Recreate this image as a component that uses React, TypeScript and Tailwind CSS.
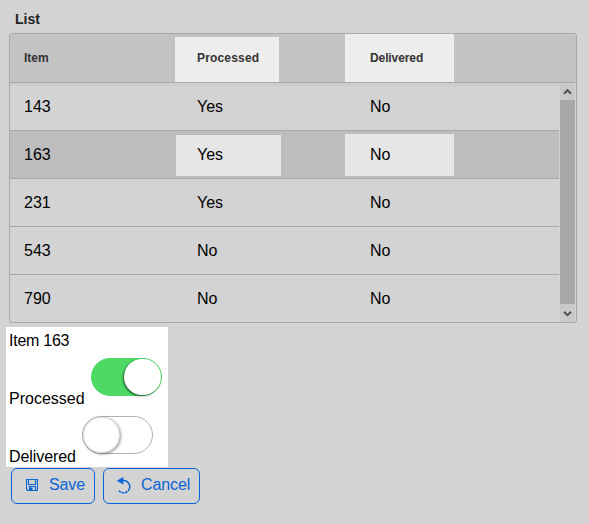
import React from "react";

type Row = { id: string; processed: boolean; delivered: boolean };

const rows: Row[] = [
  { id: "143", processed: true, delivered: false },
  { id: "163", processed: true, delivered: false },
  { id: "231", processed: true, delivered: false },
  { id: "543", processed: false, delivered: false },
  { id: "790", processed: false, delivered: false },
];

const yesNo = (v: boolean) => (v ? "Yes" : "No");

function Header() {
  return (
    <div className="flex h-[49px] items-end border-b border-[#a8a8a8] bg-[#c3c3c3] text-xs font-bold text-[#333]">
      <div className="flex h-12 w-[165px] items-center pl-3.5">Item</div>
      <div className="flex h-[45px] w-[104px] items-center bg-[#ededed] pb-[3px] pl-[22px] tracking-[0.17px]">Processed</div>
      <div className="ml-[66px] flex h-12 w-[109px] items-center bg-[#ededed] pl-[25px] tracking-[-0.1px]">Delivered</div>
    </div>
  );
}

function ListRow({ row, first, last, selected }: { row: Row; first: boolean; last: boolean; selected: boolean }) {
  const mark = selected ? "bg-[#e6e6e6]" : "";
  return (
    <div
      className={`flex items-start ${last ? "h-[47px]" : "h-12 border-b border-[#a8a8a8]"} ${
        selected ? "bg-[#bdbdbd]" : ""
      } ${first ? "shadow-[inset_0_3px_0_#cdcdcd]" : ""}`}
    >
      <div className="flex h-[47px] w-[166px] items-center pl-3.5">{row.id}</div>
      <div className={`mt-1 flex h-[41px] w-[105px] items-center pl-[21px] pb-px ${mark}`}>{yesNo(row.processed)}</div>
      <div className={`ml-16 mt-[3px] flex h-[42px] w-[109px] items-center pl-[25px] ${mark}`}>{yesNo(row.delivered)}</div>
    </div>
  );
}

function ScrollBar() {
  return (
    <div className="flex w-[15px] flex-col bg-[#a8a8a8]">
      <div className="flex h-[17px] items-center justify-center bg-[#c9c9c9]">
        <svg width="9" height="7" viewBox="0 0 9 7" fill="none" stroke="#505050" strokeWidth="2">
          <path d="M1 5.7 4.5 2.2 8 5.7" />
        </svg>
      </div>
      <div className="flex-1" />
      <div className="flex h-[18px] items-center justify-center bg-[#c9c9c9]">
        <svg width="9" height="7" viewBox="0 0 9 7" fill="none" stroke="#505050" strokeWidth="2">
          <path d="M1 1.7 4.5 5.2 8 1.7" />
        </svg>
      </div>
    </div>
  );
}

function Toggle({ on }: { on: boolean }) {
  return (
    <div
      className={`flex h-[38px] w-[71px] rounded-full border ${
        on ? "justify-end border-[#4cd964] bg-[#4cd964]" : "border-[#b3b3b3] bg-white"
      }`}
    >
      <div
        className={`h-9 w-[37px] rounded-full bg-white ${
          on
            ? "shadow-[-1px_1px_2px_rgba(0,0,0,0.6)]"
            : "shadow-[inset_0_0_2px_rgba(0,0,0,0.4),1px_1px_3px_rgba(0,0,0,0.4)]"
        }`}
      />
    </div>
  );
}

function SaveIcon() {
  return (
    <svg className="mb-0.5" width="12" height="12" viewBox="0 0 12 12" fill="none" stroke="#0b64d4" strokeWidth="1.15">
      <path d="M.5.5h11v11H1.5l-1-1zM2.5.5v5h7v-5M3.5 11.5v-4h6v4" />
      <path d="M4 8.5h2.5V11H4z" fill="#0b64d4" stroke="none" />
    </svg>
  );
}

function UndoIcon() {
  return (
    <svg className="mb-0.5" width="15" height="17" viewBox="0 0 15 17" fill="none" stroke="#0b64d4" strokeWidth="1.5">
      <path d="M6.5 3.6A6.2 6.2 0 0 1 13.4 11.8" />
      <path d="M13.4 11.8a6.2 6.2 0 0 1-10.9 1.4" strokeDasharray="2.6 .8" />
      <path d="M.7 3.8 7.3 0v7.6z" fill="#0b64d4" stroke="none" />
    </svg>
  );
}

export default function App() {
  return (
    <main className="h-[524px] w-[589px] overflow-hidden bg-[#d3d3d3] font-['Liberation_Sans',Arial,sans-serif] text-base leading-5 text-black">
      <h1 className="h-[33px] pl-[15px] pt-[9px] text-sm font-bold leading-5 text-[#222]">List</h1>
      <section className="ml-[9px] h-[290px] w-[568px] overflow-hidden rounded-[3px] border border-[#a8a8a8]">
        <Header />
        <div className="flex h-[239px]">
          <div className="w-[549px]">
            {rows.map((row, i) => (
              <ListRow key={row.id} row={row} first={i === 0} last={i === rows.length - 1} selected={i === 1} />
            ))}
          </div>
          <div className="ml-px flex">
            <ScrollBar />
          </div>
        </div>
      </section>
      <section className="ml-1.5 mt-1 h-[140px] w-[162px] bg-white pl-[3px]">
        <div className="h-[31px] pt-1 tracking-[-0.25px]">Item 163</div>
        <div className="flex h-[58px]">
          <span className="w-[82px] pt-[31px]">Processed</span>
          <Toggle on />
        </div>
        <div className="flex">
          <span className="w-[73px] pt-[31px] tracking-[-0.08px]">Delivered</span>
          <Toggle on={false} />
        </div>
      </section>
      <div className="ml-[11px] mt-px flex gap-2 text-[#0b64d4]">
        <button className="flex h-9 w-[84px] items-center rounded-md border border-[#0b64d4] pl-3.5">
          <SaveIcon />
          <span className="ml-[11px] pb-0.5 tracking-[-0.1px]">Save</span>
        </button>
        <button className="flex h-9 w-[97px] items-center rounded-md border border-[#0b64d4] pl-3">
          <UndoIcon />
          <span className="ml-2.5 pb-0.5 tracking-[-0.1px]">Cancel</span>
        </button>
      </div>
    </main>
  );
}
